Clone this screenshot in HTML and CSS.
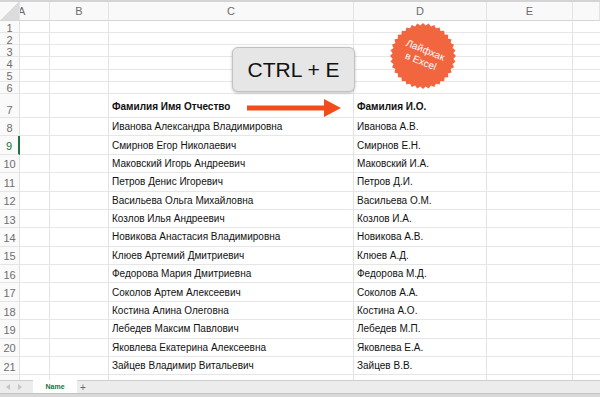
FILE: index.html
```html
<!DOCTYPE html>
<html lang="ru">
<head>
  <meta charset="UTF-8" />
  <title>Лайфхак в Excel — CTRL + E</title>
  <link rel="stylesheet" href="styles.css">
</head>
<body>

  <div class="app">
    <div class="sheet">
      <div id="grid" class="grid"></div>

      <div class="hotkey">CTRL + E</div>

      <svg class="arrow" width="96" height="20" viewBox="0 0 96 20">
        <rect x="0" y="7.5" width="80" height="5" fill="#f24c1c"/>
        <polygon points="77,1 94,10 77,19" fill="#f24c1c"/>
      </svg>

      <div class="badge">
        <svg id="star" width="68" height="68" viewBox="-34 -34 68 68"></svg>
        <div class="badge-text">Лайфхак<br>в Excel</div>
      </div>
    </div>

    <div class="tabs">
      <svg class="nav" width="26" height="12" viewBox="0 0 26 12">
        <polygon points="10,3 10,9 6,6" fill="#c4c4c4"/>
        <polygon points="18,3 18,9 22,6" fill="#c4c4c4"/>
      </svg>
      <span class="tab">Name</span>
      <span class="add">+</span>
    </div>
    <div class="status"></div>
  </div>

  <script>
    const letters = ["", "A", "B", "C", "D", "E", ""];
    const people = [
      ["Иванова Александра Владимировна", "Иванова А.В."],
      ["Смирнов Егор Николаевич", "Смирнов Е.Н."],
      ["Маковский Игорь Андреевич", "Маковский И.А."],
      ["Петров Денис Игоревич", "Петров Д.И."],
      ["Васильева Ольга Михайловна", "Васильева О.М."],
      ["Козлов Илья Андреевич", "Козлов И.А."],
      ["Новикова Анастасия Владимировна", "Новикова А.В."],
      ["Клюев Артемий Дмитриевич", "Клюев А.Д."],
      ["Федорова Мария Дмитриевна", "Федорова М.Д."],
      ["Соколов Артем Алексеевич", "Соколов А.А."],
      ["Костина Алина Олеговна", "Костина А.О."],
      ["Лебедев Максим Павлович", "Лебедев М.П."],
      ["Яковлева Екатерина Алексеевна", "Яковлева Е.А."],
      ["Зайцев Владимир Витальевич", "Зайцев В.В."],
      ["Полякова Ирина Викторовна", "Полякова И.В."]
    ];

    const grid = document.getElementById("grid");

    function cell(cls, text) {
      const div = document.createElement("div");
      div.className = cls;
      if (text) div.textContent = text;
      grid.appendChild(div);
      return div;
    }

    // column headers
    letters.forEach((l, i) => {
      const c = cell(i === 0 ? "col-head corner" : "col-head", l);
      if (l === "A") c.classList.add("col-a");
    });

    // rows 1..22
    for (let r = 1; r <= 22; r++) {
      const head = cell("row-head", String(r));
      if (r === 7) head.classList.add("bottom");
      if (r === 9) head.classList.add("active");

      let c = "", d = "", extra = "";
      if (r === 7) {
        c = "Фамилия Имя Отчество";
        d = "Фамилия И.О.";
        extra = " bold";
      } else if (r >= 8) {
        [c, d] = people[r - 8];
      }
      cell("cell", "");
      cell("cell", "");
      cell("cell" + extra, c);
      cell("cell" + extra, d);
      cell("cell", "");
      cell("cell last", "");
    }

    // jagged sticker edge
    const teeth = 36;
    const pts = [];
    for (let i = 0; i < teeth * 2; i++) {
      const a = Math.PI * i / teeth;
      const rad = i % 2 === 0 ? 33 : 30.5;
      pts.push((Math.cos(a) * rad).toFixed(2) + "," + (Math.sin(a) * rad).toFixed(2));
    }
    document.getElementById("star").innerHTML =
      `<polygon points="${pts.join(" ")}" fill="#f1663f"/>`;
  </script>

</body>
</html>
```

FILE: styles.css
```css
* {
  box-sizing: border-box;
}
body {
  margin: 0;
  font-family: "Liberation Sans", Arial, sans-serif;
  background: #fff;
  overflow: hidden;
}
.app {
  width: 600px;
  height: 397px;
  display: flex;
  flex-direction: column;
}
.sheet {
  position: relative;
  height: 380px;
  overflow: hidden;
  border-top: 2px solid #d4d4d4;
}
.grid {
  display: grid;
  grid-template-columns: 20px 30px 59px 245px 133px 86px 27px;
  grid-template-rows: 19px repeat(6, 12.17px) 24px repeat(15, 18.4px);
}
.col-head {
  display: flex;
  align-items: center;
  justify-content: center;
  font-size: 11px;
  color: #6b6b6b;
  background: #f9f9f9;
  border-right: 1px solid #e3e3e3;
  border-bottom: 1px solid #d6d6d6;
}
.col-head.col-a {
  justify-content: flex-start;
  margin-left: -2px;
}
.corner {
  background: linear-gradient(to bottom right, #f9f9f9 50%, #dcdcdc 50%);
  position: relative;
  z-index: 1;
}
.row-head {
  display: flex;
  align-items: center;
  justify-content: center;
  font-size: 11px;
  color: #6e6e6e;
  background: #fafafa;
  border-right: 1px solid #e0e0e0;
  border-bottom: 1px solid #e6e6e6;
  padding-top: 2px;
}
.row-head.bottom {
  align-items: flex-end;
  padding-bottom: 1px;
}
.row-head.active {
  color: #217346;
  border-right: 2px solid #217346;
}
.cell {
  display: flex;
  align-items: center;
  padding-left: 3px;
  font-size: 10px;
  color: #111;
  white-space: nowrap;
  overflow: hidden;
  border-right: 1px solid #e3e3e3;
  border-bottom: 1px solid #e6e6e6;
}
.cell.bold {
  font-weight: bold;
  padding-top: 3px;
}
.cell.last {
  border-right: none;
}
.hotkey {
  position: absolute;
  left: 232px;
  top: 45px;
  width: 123px;
  height: 45px;
  display: flex;
  align-items: center;
  justify-content: center;
  font-size: 21px;
  color: #111;
  background: #e6e6e6;
  border: 1px solid #c2c2c2;
  border-radius: 6px;
  box-shadow: 0 1px 3px rgba(0, 0, 0, 0.25);
}
.arrow {
  position: absolute;
  left: 247px;
  top: 96px;
}
.badge {
  position: absolute;
  left: 389px;
  top: 20px;
  width: 68px;
  height: 68px;
}
.badge svg {
  display: block;
}
.badge-text {
  position: absolute;
  inset: 0;
  display: flex;
  align-items: center;
  justify-content: center;
  text-align: center;
  color: #fff;
  font-size: 10px;
  line-height: 12px;
  transform: rotate(22deg);
}
.tabs {
  height: 13px;
  display: flex;
  align-items: stretch;
  background: #ececec;
  border-top: 1px solid #cfcfcf;
  font-size: 7px;
}
.nav {
  display: block;
}
.tab {
  margin-left: 7px;
  width: 44px;
  display: flex;
  align-items: center;
  justify-content: center;
  background: #fff;
  color: #217346;
  font-weight: bold;
  margin-top: -1px;
}
.add {
  width: 12px;
  display: flex;
  align-items: center;
  justify-content: center;
  color: #666;
  font-size: 10px;
}
.status {
  flex: 1;
  background: #d8d8d8;
  border-top: 1px solid #c4c4c4;
}
```
